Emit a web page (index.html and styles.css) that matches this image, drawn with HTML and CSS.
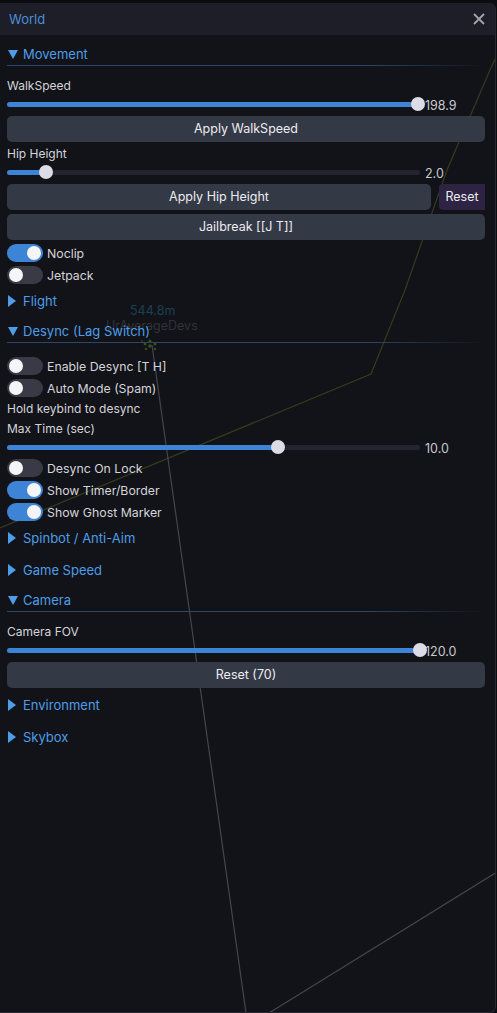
FILE: index.html
```html
<!DOCTYPE html>
<html>
<head>
<meta charset="utf-8">
<link rel="stylesheet" href="styles.css">
</head>
<body>
<div class="window">
  <svg class="scene" width="497" height="1013" viewBox="0 0 497 1013">
    <polyline points="497,55 490,70 447,170 405,290 371,374 0,528" fill="none" stroke="#333d1c" stroke-width="1.2"/>
    <line x1="152" y1="345" x2="246" y2="1013" stroke="#44454d" stroke-width="1.2"/>
    <line x1="269" y1="1013" x2="497" y2="872" stroke="#44454d" stroke-width="1.2"/>
    <text x="130" y="315" class="dist">544.8m</text>
    <text x="106" y="330" class="tag">UrAverageDevs</text>
    <g fill="#3a5219">
      <circle cx="150" cy="341" r="1.6"/>
      <circle cx="145" cy="344" r="1.4"/>
      <circle cx="155" cy="344" r="1.4"/>
      <circle cx="150" cy="346" r="1.8"/>
      <circle cx="146" cy="349" r="1.2"/>
      <circle cx="155" cy="349" r="1.2"/>
    </g>
    <circle cx="142" cy="341" r="1" fill="#5a2a22"/>
  </svg>
  <div class="titlebar">
    <span class="title">World</span>
    <svg class="close" width="12" height="12" viewBox="0 0 12 12"><path d="M1 1 L11 11 M11 1 L1 11" stroke="#a3a3ab" stroke-width="1.8" fill="none"/></svg>
  </div>
  <div class="content">
    <div class="sec-open"><span class="tri-down"></span>Movement</div>
    <div class="label first">WalkSpeed</div>
    <div class="slider"><div class="track"><div class="fill" style="width:99.5%"></div><div class="thumb" style="left:99.5%"></div></div><span class="val">198.9</span></div>
    <div class="btn b5">Apply WalkSpeed</div>
    <div class="label">Hip Height</div>
    <div class="slider"><div class="track"><div class="fill" style="width:9.4%"></div><div class="thumb" style="left:9.4%"></div></div><span class="val">2.0</span></div>
    <div class="btnrow b5"><div class="btn grow">Apply Hip Height</div><div class="btn reset">Reset</div></div>
    <div class="btn">Jailbreak [[J T]]</div>
    <div class="toggle-row"><span class="toggle on"><i></i></span>Noclip</div>
    <div class="toggle-row"><span class="toggle"><i></i></span>Jetpack</div>
    <div class="sec-closed"><span class="tri-right"></span>Flight</div>
    <div class="sec-open"><span class="tri-down"></span>Desync (Lag Switch)</div>
    <div class="toggle-row first2"><span class="toggle"><i></i></span>Enable Desync [T H]</div>
    <div class="toggle-row"><span class="toggle"><i></i></span>Auto Mode (Spam)</div>
    <div class="label">Hold keybind to desync</div>
    <div class="label">Max Time (sec)</div>
    <div class="slider"><div class="track"><div class="fill" style="width:65.6%"></div><div class="thumb" style="left:65.6%"></div></div><span class="val">10.0</span></div>
    <div class="toggle-row b5"><span class="toggle"><i></i></span>Desync On Lock</div>
    <div class="toggle-row"><span class="toggle on"><i></i></span>Show Timer/Border</div>
    <div class="toggle-row"><span class="toggle on"><i></i></span>Show Ghost Marker</div>
    <div class="sec-closed"><span class="tri-right"></span>Spinbot / Anti-Aim</div>
    <div class="sec-closed b4"><span class="tri-right"></span>Game Speed</div>
    <div class="sec-open"><span class="tri-down"></span>Camera</div>
    <div class="label first">Camera FOV</div>
    <div class="slider"><div class="track"><div class="fill" style="width:100%"></div><div class="thumb" style="left:100%"></div></div><span class="val">120.0</span></div>
    <div class="btn b5">Reset (70)</div>
    <div class="sec-closed"><span class="tri-right"></span>Environment</div>
    <div class="sec-closed b4"><span class="tri-right"></span>Skybox</div>
  </div>
</div>
</body>
</html>
```

FILE: styles.css
```css
html, body {
  margin: 0;
  padding: 0;
  background: #0b0c0f;
}
body {
  width: 497px;
  height: 1013px;
  overflow: hidden;
  font-family: Inter, "Noto Sans", sans-serif;
  font-size: 12px;
  color: #d4d4d9;
}
.window {
  position: relative;
  margin-top: 3px;
  width: 496px;
  height: 1010px;
  box-sizing: border-box;
  background: #121318;
  border: 1px solid #272830;
  border-left: none;
  border-top: none;
  border-radius: 0 6px 6px 0;
  overflow: hidden;
}
.scene {
  position: absolute;
  left: 0;
  top: -3px;
  z-index: 0;
}
.scene .dist {
  font-family: Inter, sans-serif;
  font-size: 12.5px;
  fill: #1b4150;
}
.scene .tag {
  font-family: Inter, sans-serif;
  font-size: 12.5px;
  fill: #313238;
}
.titlebar {
  position: relative;
  z-index: 1;
  height: 32px;
  background: #1d1e27;
  display: flex;
  align-items: center;
  justify-content: space-between;
  padding: 0 9px 0 9px;
}
.title {
  color: #4a8fd8;
  font-size: 13px;
}
.close {
  display: block;
  margin-right: 1px;
}
.content {
  position: relative;
  z-index: 1;
  display: flex;
  flex-direction: column;
  padding: 3px 10px 0 7px;
}
.content > * {
  margin-top: 4px;
}
.sec-open, .sec-closed {
  display: flex;
  align-items: center;
  color: #4e9de8;
  font-size: 13px;
  line-height: 18px;
}
.sec-open {
  height: 18px;
  padding: 3px 0 3px;
  background: linear-gradient(to right, #2a4868 0%, #2a4868 75%, rgba(42,72,104,0) 100%) no-repeat left bottom / 100% 1px;
  box-sizing: content-box;
}
.sec-closed {
  height: 28px;
  margin-top: 3px;
}
.sec-closed.b4 { margin-top: 4px; }
.tri-down {
  width: 0;
  height: 0;
  border-left: 5.5px solid transparent;
  border-right: 5.5px solid transparent;
  border-top: 9px solid #4e9de8;
  margin: 0 5px 0 1px;
}
.tri-right {
  width: 0;
  height: 0;
  border-top: 6px solid transparent;
  border-bottom: 6px solid transparent;
  border-left: 8px solid #4e9de8;
  margin: 0 7px 0 1px;
}
.label {
  height: 16px;
  line-height: 16px;
}
.label.first { margin-top: 12px; }
.slider {
  position: relative;
  height: 14px;
  margin-top: 3px;
  display: flex;
  align-items: center;
}
.track {
  position: relative;
  width: 413px;
  height: 5px;
  border-radius: 3px;
  background: #23242d;
}
.fill {
  height: 100%;
  border-radius: 3px;
  background: #3d84d6;
}
.thumb {
  position: absolute;
  top: 50%;
  width: 14px;
  height: 14px;
  margin: -7px 0 0 -7px;
  border-radius: 50%;
  background: #dcdce6;
  z-index: 2;
}
.val {
  margin-left: 5px;
  margin-top: 3px;
  color: #c8c8cd;
  font-size: 12.5px;
}
.btn {
  height: 26px;
  line-height: 26px;
  text-align: center;
  background: #343946;
  border-radius: 5px;
  color: #ececf0;
  font-size: 12.5px;
}
.b5 { margin-top: 5px !important; }
.btnrow {
  display: flex;
  gap: 8px;
}
.btnrow .grow { flex: 1; }
.btn.reset {
  width: 46px;
  background: #2e2342;
  border-radius: 4px 0 0 4px;
}
.toggle-row {
  display: flex;
  align-items: center;
  height: 18px;
  font-size: 12.3px;
}
.toggle-row.first2 { margin-top: 14px; }
.toggle {
  position: relative;
  width: 36px;
  height: 18px;
  border-radius: 9px;
  background: #393a45;
  margin-right: 4px;
  flex: none;
}
.toggle i {
  position: absolute;
  top: 2px;
  left: 2px;
  width: 14px;
  height: 14px;
  border-radius: 50%;
  background: #f5f5f7;
}
.toggle.on { background: #3d84d6; }
.toggle.on i { left: 20px; }
```
